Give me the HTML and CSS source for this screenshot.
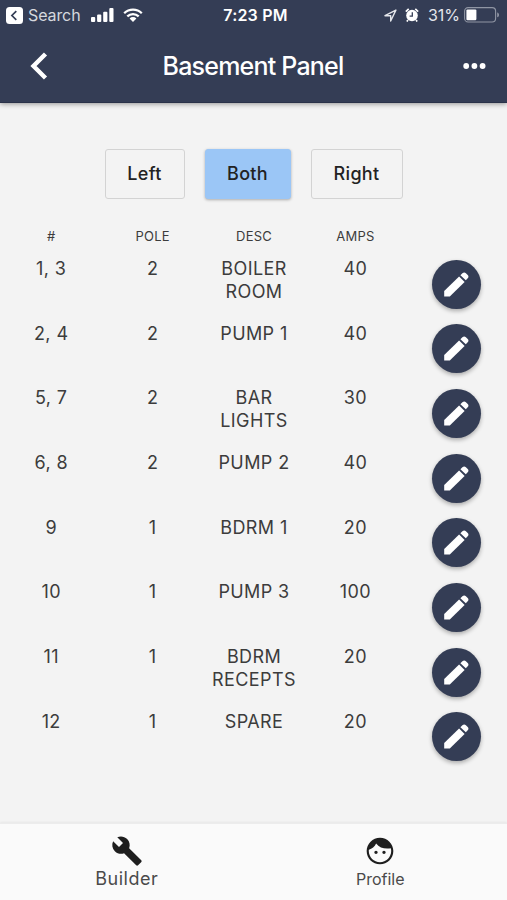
FILE: index.html
```html
<!DOCTYPE html>
<html lang="en">
<head>
    <meta charset="UTF-8">
    <meta name="viewport" content="width=device-width, initial-scale=1.0">
    <title>Basement Panel</title>
    <link rel="stylesheet" href="styles.css">
</head>
<body>
    <svg class="sprite" aria-hidden="true">
        <symbol id="icon-edit" viewBox="0 0 25 25">
            <path d="M.2 24.6v-5.6L15.1 4.6l5.5 5.4L5.8 24.6z"/>
            <path d="M16.4 3.2l2-2c1.1-1 2.5-1 3.5 0l1.8 1.8c1 1 1 2.3 0 3.3l-1.9 2z"/>
        </symbol>
    </svg>

    <header class="header">
        <div class="status-bar">
            <div class="status-left">
                <svg class="back-app" viewBox="0 0 17 17">
                    <rect width="17" height="17" rx="3.5" fill="#fff"/>
                    <path d="M10.3 4.2L5.9 8.5l4.4 4.3" fill="none" stroke="#343d55" stroke-width="1.7"/>
                </svg>
                <span class="search">Search</span>
                <svg class="signal" viewBox="0 0 24 14">
                    <rect x="0" y="9" width="4.2" height="5" rx="1"/>
                    <rect x="6.1" y="6.5" width="4.2" height="7.5" rx="1"/>
                    <rect x="12.2" y="3.7" width="4.2" height="10.3" rx="1"/>
                    <rect x="18.3" y="0" width="4.2" height="14" rx="1"/>
                </svg>
                <svg class="wifi" viewBox="0 0 20 14">
                    <path d="M1.2 5.2a12.6 12.6 0 0 1 17.6 0M4.3 8.4a8.2 8.2 0 0 1 11.4 0" fill="none" stroke="#fff" stroke-width="2.3"/>
                    <path d="M10 14l-3.4-3.5a4.8 4.8 0 0 1 6.8 0z"/>
                </svg>
            </div>
            <span class="time">7:23 PM</span>
            <div class="status-right">
                <svg class="location" viewBox="0 0 13 13">
                    <path d="M1 6.7L11.9 1.1 6.7 12V6.7z" fill="none" stroke="#e4e6eb" stroke-width="1.4" stroke-linejoin="round"/>
                </svg>
                <svg class="alarm" viewBox="0 0 14 14">
                    <circle cx="7" cy="7.5" r="5.8"/>
                    <path d="M.8 3.6L3.7.9M13.2 3.6L10.3.9M3 12l-1.2 1.6M11 12l1.2 1.6" stroke="#fff" stroke-width="1.6"/>
                    <path d="M7.3 4.2v3.9H4.6" fill="none" stroke="#343d55" stroke-width="1.3"/>
                </svg>
                <span class="percent">31%</span>
                <svg class="battery" viewBox="0 0 36 16">
                    <rect x=".6" y=".6" width="31" height="14.4" rx="3.5" fill="none" stroke="#9096a4" stroke-width="1.1"/>
                    <rect x="2.4" y="2.4" width="10" height="10.8" rx="1.2"/>
                    <path d="M33.2 5.4c2.4.5 2.4 4.3 0 4.8z" fill="#9096a4"/>
                </svg>
            </div>
        </div>
        <div class="toolbar">
            <svg class="back" viewBox="0 0 18 28">
                <path d="M15.5 2L3.5 14l12 12" fill="none" stroke="#fff" stroke-width="4.4"/>
            </svg>
            <h1>Basement Panel</h1>
            <svg class="more" viewBox="0 0 24 6">
                <circle cx="3.2" cy="3" r="2.9"/>
                <circle cx="11.4" cy="3" r="2.9"/>
                <circle cx="19.6" cy="3" r="2.9"/>
            </svg>
        </div>
    </header>

    <main class="content">
        <div class="sides">
            <button class="side left">Left</button>
            <button class="side both active">Both</button>
            <button class="side right">Right</button>
        </div>

        <div class="row labels">
            <span>#</span><span>POLE</span><span>DESC</span><span>AMPS</span>
        </div>
        <div class="row">
            <span>1, 3</span><span>2</span><span>BOILER ROOM</span><span>40</span>
            <button class="edit"><svg><use href="#icon-edit"/></svg></button>
        </div>
        <div class="row">
            <span>2, 4</span><span>2</span><span>PUMP 1</span><span>40</span>
            <button class="edit"><svg><use href="#icon-edit"/></svg></button>
        </div>
        <div class="row">
            <span>5, 7</span><span>2</span><span>BAR LIGHTS</span><span>30</span>
            <button class="edit"><svg><use href="#icon-edit"/></svg></button>
        </div>
        <div class="row">
            <span>6, 8</span><span>2</span><span>PUMP 2</span><span>40</span>
            <button class="edit"><svg><use href="#icon-edit"/></svg></button>
        </div>
        <div class="row">
            <span>9</span><span>1</span><span>BDRM 1</span><span>20</span>
            <button class="edit"><svg><use href="#icon-edit"/></svg></button>
        </div>
        <div class="row">
            <span>10</span><span>1</span><span>PUMP 3</span><span>100</span>
            <button class="edit"><svg><use href="#icon-edit"/></svg></button>
        </div>
        <div class="row">
            <span>11</span><span>1</span><span>BDRM RECEPTS</span><span>20</span>
            <button class="edit"><svg><use href="#icon-edit"/></svg></button>
        </div>
        <div class="row">
            <span>12</span><span>1</span><span>SPARE</span><span>20</span>
            <button class="edit"><svg><use href="#icon-edit"/></svg></button>
        </div>
    </main>

    <nav class="tabs">
        <a class="tab active">
            <svg viewBox="0 0 24 24"><path d="M22.7 19l-9.1-9.1c.9-2.3.4-5-1.5-6.9-2-2-5-2.4-7.4-1.3L9 6 6 9 1.6 4.7C.4 7.1.9 10.1 2.9 12.1c1.9 1.9 4.6 2.4 6.9 1.5l9.1 9.1c.4.4 1 .4 1.4 0l2.3-2.3c.5-.4.5-1.1.1-1.4z"/></svg>
            <span>Builder</span>
        </a>
        <a class="tab">
            <svg viewBox="0 0 24 24"><path d="M9 11.75c-.69 0-1.25.56-1.25 1.25s.56 1.25 1.25 1.25 1.25-.56 1.25-1.25-.56-1.25-1.25-1.25zm6 0c-.69 0-1.25.56-1.25 1.25s.56 1.25 1.25 1.25 1.25-.56 1.25-1.25-.56-1.25-1.25-1.25zM12 2C6.48 2 2 6.48 2 12s4.48 10 10 10 10-4.48 10-10S17.52 2 12 2zm0 18.4c-4.6 0-8.4-3.8-8.4-8.4 0-.29.02-.58.05-.86C6 10.2 8 8.7 9.1 6.3 11.07 8.9 14.05 10.2 17.42 10.2c.98 0 1.83-.05 2.65-.2.21.7.33 1.3.33 2 0 4.6-3.8 8.4-8.4 8.4z"/></svg>
            <span>Profile</span>
        </a>
    </nav>
</body>
</html>
```
FILE: styles.css
```css
* {
    box-sizing: border-box;
}

body {
    margin: 0;
    height: 100vh;
    display: flex;
    flex-direction: column;
    overflow: hidden;
    background-color: #f3f3f3;
    color: #3c3c3c;
    font-family: Inter, Roboto, sans-serif;
}

svg {
    display: block;
    flex-shrink: 0;
}

button {
    font-family: inherit;
    padding: 0;
}

.sprite {
    display: none;
}

.header {
    height: 103px;
    background-color: #343d55;
    border-bottom: 1px solid #2a3249;
    box-shadow: 0 1px 5px rgba(0, 0, 0, 0.4);
    color: white;
    fill: white;
}

.status-bar {
    height: 30px;
    display: grid;
    grid-template-columns: 1fr auto 1fr;
    align-items: center;
    padding: 0 7px 0 6px;
}

.status-left, .status-right {
    display: flex;
    align-items: center;
}

.status-right {
    justify-content: flex-end;
}

.back-app {
    width: 17px;
    height: 17px;
}

.search {
    margin-left: 5px;
    width: 63px;
    font-size: 16px;
    letter-spacing: -0.1px;
    color: #d5d8de;
}

.signal {
    width: 24px;
    height: 14px;
}

.wifi {
    width: 20px;
    height: 14px;
    margin-left: 8px;
}

.time {
    padding-left: 5px;
    font-size: 16px;
    font-weight: 600;
    letter-spacing: 0.2px;
}

.location {
    width: 13px;
    height: 13px;
}

.alarm {
    width: 14px;
    height: 14px;
    margin-left: 8px;
}

.percent {
    margin: 0 4px 0 9px;
    font-size: 16px;
    color: #e4e6eb;
}

.battery {
    width: 36px;
    height: 16px;
}

.toolbar {
    height: 72px;
    display: grid;
    grid-template-columns: 1fr auto 1fr;
    align-items: center;
    padding: 0 20px;
}

.back {
    width: 18px;
    height: 28px;
    margin-left: 10px;
}

.more {
    width: 24px;
    height: 6px;
    justify-self: end;
}

h1 {
    margin: 0 1px 0 0;
    font-size: 25px;
    font-weight: 500;
    letter-spacing: -0.8px;
}

.content {
    flex: 1;
    padding-top: 46px;
}

.sides {
    display: flex;
    justify-content: center;
    gap: 20px;
    height: 50px;
    margin-bottom: 28px;
}

.side {
    width: 80px;
    padding-bottom: 2px;
    border: 1px solid #d3d3d3;
    border-radius: 3px;
    background-color: transparent;
    color: #222;
    font-size: 18px;
    font-weight: 500;
    letter-spacing: 0.3px;
}

.both {
    width: 86px;
}

.right {
    width: 92px;
}

.side.active {
    border-color: #9bc6f6;
    background-color: #9bc6f6;
    box-shadow: 0 1px 3px rgba(0, 0, 0, 0.3);
}

.row {
    display: grid;
    grid-template-columns: repeat(5, 1fr);
    align-items: start;
    height: 64.7px;
    font-size: 18px;
    line-height: 23px;
    letter-spacing: 0.4px;
    text-align: center;
}

.row span {
    padding: 0 5px 0 6px;
}

.labels {
    height: 30px;
    font-size: 13px;
    line-height: 19px;
    letter-spacing: 0.2px;
}

.edit {
    display: flex;
    justify-content: center;
    align-items: center;
    justify-self: center;
    width: 49px;
    height: 49px;
    margin-top: 2.5px;
    border: 0;
    border-radius: 50%;
    background-color: #343d55;
    box-shadow: 0 2px 4px rgba(0, 0, 0, 0.3);
}

.edit svg {
    width: 25px;
    height: 25px;
    fill: white;
}

.tabs {
    display: flex;
    height: 77px;
    border-top: 1px solid #ececec;
    background-color: #fafafa;
    box-shadow: 0 -1px 2px rgba(0, 0, 0, 0.05);
}

.tab {
    flex: 1;
    display: flex;
    flex-direction: column;
    align-items: center;
    padding-top: 11px;
    font-size: 16px;
    line-height: 24px;
    color: #4a4a4a;
}

.tab.active {
    font-size: 18px;
    line-height: 23px;
    letter-spacing: 0.5px;
}

.tab svg {
    width: 32px;
    height: 32px;
    fill: #1e1e1e;
}
```
